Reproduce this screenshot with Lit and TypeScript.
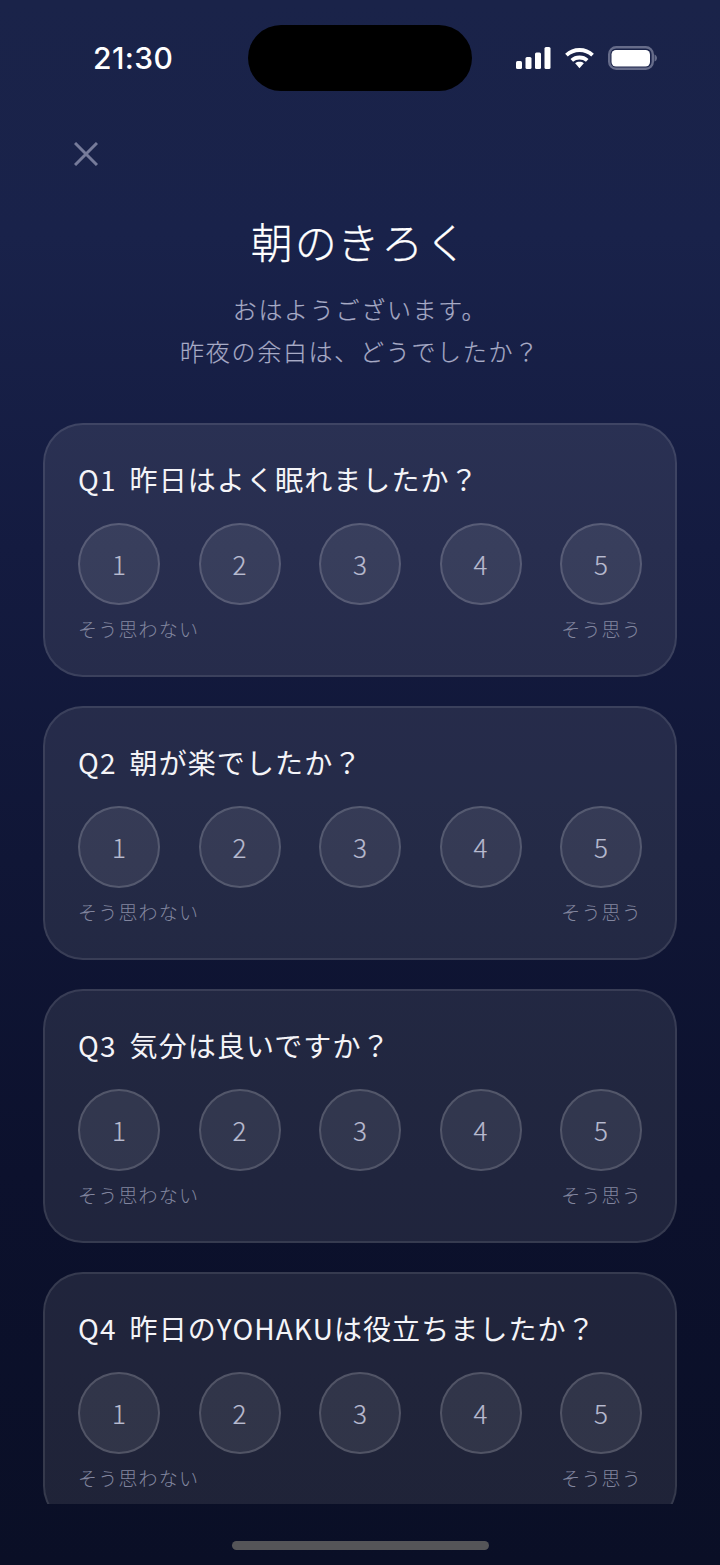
import { css, html, LitElement } from "lit";
import { customElement } from "lit/decorators.js";

const QUESTIONS = [
  { id: "Q1", text: "昨日はよく眠れましたか？" },
  { id: "Q2", text: "朝が楽でしたか？" },
  { id: "Q3", text: "気分は良いですか？" },
  { id: "Q4", text: "昨日のYOHAKUは役立ちましたか？" },
];

@customElement("app-root")
export default class AppRoot extends LitElement {
  static styles = css`
    :host {
      display: block;
      position: relative;
      width: 720px;
      height: 1565px;
      overflow: hidden;
      background: linear-gradient(180deg, #1a2349 0%, #19224a 15%, #141b40 35%, #101636 55%, #0c112d 75%, #0a0f26 100%);
      font-family: "Noto Sans CJK JP", "Noto Sans", sans-serif;
      color: #fff;
    }

    .page {
      display: flex;
      flex-direction: column;
      height: 1565px;
    }

    .status {
      display: flex;
      justify-content: space-between;
      align-items: center;
      height: 116px;
      flex: none;
      box-sizing: border-box;
      padding: 0 63px 0 93px;
    }

    .time {
      font-family: Inter, "Liberation Sans", sans-serif;
      font-size: 30px;
      font-weight: 500;
      letter-spacing: 0.4px;
      line-height: 1;
    }

    .island {
      position: absolute;
      left: 248px;
      top: 25px;
      width: 224px;
      height: 66px;
      border-radius: 33px;
      background: #000;
    }

    .indicators {
      display: flex;
      align-items: center;
      gap: 14px;
    }

    .close {
      flex: none;
      display: flex;
      padding: 26px 0 0 74px;
      height: 28px;
    }

    .title {
      flex: none;
      margin: 42px 0 0;
      text-align: center;
      font-size: 42px;
      font-weight: 300;
      letter-spacing: 2px;
      line-height: 58px;
      -webkit-text-stroke: 0.3px #fff;
    }

    .sub {
      flex: none;
      margin: 18px 0 0;
      text-align: center;
      color: #a8abc6;
      font-size: 24px;
      font-weight: 300;
      letter-spacing: 1.7px;
      line-height: 42px;
      -webkit-text-stroke: 0.2px #a8abc6;
    }

    .list {
      flex: none;
      height: 1081px;
      margin-top: 51px;
      padding: 0 43px;
      box-sizing: border-box;
      overflow: hidden;
      display: flex;
      flex-direction: column;
      gap: 29px;
    }

    .card {
      flex: none;
      height: 254px;
      box-sizing: border-box;
      padding: 32px 33px 0;
      border: 2px solid rgba(255, 255, 255, 0.1);
      border-radius: 40px;
      background: rgba(255, 250, 240, 0.085);
    }

    .question {
      display: flex;
      gap: 13px;
      font-size: 28px;
      font-weight: 400;
      letter-spacing: 1.1px;
      line-height: 44px;
      white-space: nowrap;
      color: #f4f4f8;
    }

    .scale {
      display: flex;
      justify-content: space-between;
      margin-top: 22px;
    }

    .dot {
      width: 82px;
      height: 82px;
      box-sizing: border-box;
      padding-bottom: 1px;
      border-radius: 50%;
      border: 2px solid rgba(255, 255, 255, 0.16);
      background: rgba(255, 255, 255, 0.08);
      display: flex;
      align-items: center;
      justify-content: center;
      color: #b8bbd0;
      font-size: 26px;
      font-weight: 300;
      -webkit-text-stroke: 0.2px #b8bbd0;
    }

    .ends {
      display: flex;
      justify-content: space-between;
      margin-top: 9px;
      color: #82869f;
      font-size: 19px;
      font-weight: 300;
      letter-spacing: 1.2px;
      line-height: 30px;
    }

    .home {
      position: absolute;
      left: 232px;
      top: 1541px;
      width: 257px;
      height: 9px;
      border-radius: 5px;
      background: #555558;
    }
  `;

  private _statusIcons() {
    return html`
      <div class="indicators">
        <svg width="35" height="22" viewBox="0 0 35 22" fill="#fff">
          <rect x="0" y="14" width="6" height="8" rx="1.5" />
          <rect x="9.5" y="10" width="6" height="12" rx="1.5" />
          <rect x="19" y="5.5" width="6" height="16.5" rx="1.5" />
          <rect x="28.5" y="0" width="6" height="22" rx="1.5" />
        </svg>
        <svg width="29" height="22" viewBox="0 0 30 22" fill="none" stroke="#fff" stroke-width="4">
          <path d="M1.5 8 C9 1 21 1 28.5 8" />
          <path d="M7 13.5 C11.5 9.5 18.5 9.5 23 13.5" />
          <path d="M10.5 16.5 L15 21.5 L19.5 16.5 C17 14.5 13 14.5 10.5 16.5 Z" fill="#fff" stroke="none" />
        </svg>
        <svg width="49" height="24" viewBox="0 0 49 24">
          <rect x="1.2" y="1.2" width="43.6" height="21.6" rx="7" fill="none" stroke="#666c8a" stroke-width="2.4" />
          <rect x="3.5" y="4" width="38.5" height="16.5" rx="4.5" fill="#fff" />
          <path d="M46.5 8.5 C48 9 49 10.5 49 12 C49 13.5 48 15 46.5 15.5 Z" fill="#666c8a" />
        </svg>
      </div>
    `;
  }

  private _card(q: { id: string; text: string }) {
    return html`
      <section class="card">
        <div class="question"><span>${q.id}</span><span>${q.text}</span></div>
        <div class="scale">
          ${[1, 2, 3, 4, 5].map((n) => html`<div class="dot">${n}</div>`)}
        </div>
        <div class="ends"><span>そう思わない</span><span>そう思う</span></div>
      </section>
    `;
  }

  render() {
    return html`
      <div class="page">
        <div class="status">
          <span class="time">21:30</span>
          ${this._statusIcons()}
        </div>
        <div class="close">
          <svg width="24" height="24" viewBox="0 0 24 24" stroke="#767b9a" stroke-width="3" fill="none">
            <path d="M1 1 L23 23 M23 1 L1 23" />
          </svg>
        </div>
        <h1 class="title">朝のきろく</h1>
        <p class="sub">おはようございます。<br />昨夜の余白は、どうでしたか？</p>
        <div class="list">${QUESTIONS.map((q) => this._card(q))}</div>
      </div>
      <div class="island"></div>
      <div class="home"></div>
    `;
  }
}
